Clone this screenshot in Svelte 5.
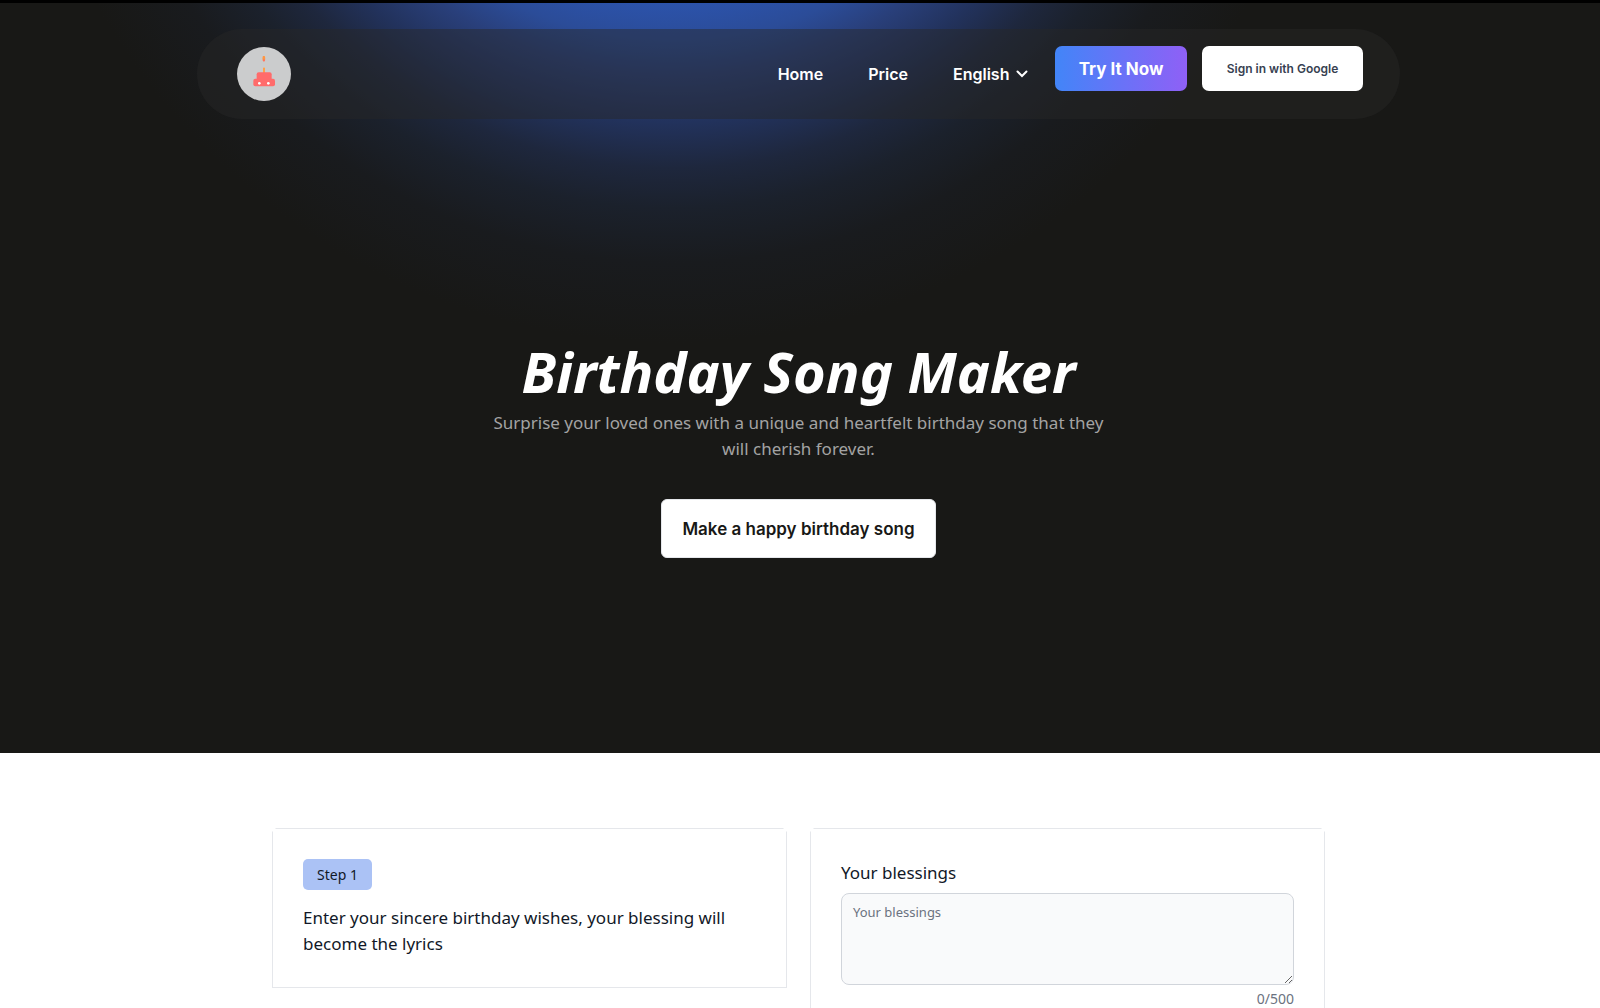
<script lang="ts">
	const maxLength = 500;

	const links = [
		{ label: 'Home', href: '#home' },
		{ label: 'Price', href: '#price' }
	];

	let language = $state('en');
	let blessings = $state('');
</script>

<div class="page">
	<section class="hero">
		<header class="navbar">
			<a class="logo" href="#home" aria-label="Birthday Song Maker">
				<svg viewBox="0 0 162 162" aria-hidden="true">
					<path d="M78 27h5c2 4 2 9 1 13l-3 4-4-4c-1-4-1-9 1-13z" fill="#ff9642" />
					<path d="M80 36l4 3-3 5-3-3z" fill="#ff6b6b" />
					<rect x="78" y="62" width="6" height="17" fill="#ffa14a" />
					<rect x="59" y="76" width="45" height="30" rx="6" fill="#ff6b6b" />
					<rect x="49" y="95" width="65" height="23" rx="6" fill="#ff6b6b" />
					<circle cx="67" cy="109" r="4" fill="#fff" />
					<circle cx="94" cy="109" r="4" fill="#fff" />
				</svg>
			</a>

			<nav class="links">
				{#each links as link}
					<a href={link.href}>{link.label}</a>
				{/each}
				<div class="language">
					<select aria-label="Language" bind:value={language}>
						<option value="en">English</option>
					</select>
					<svg viewBox="0 0 12 8" aria-hidden="true">
						<path d="M1.5 1.5 6 6l4.500-4.500" />
					</svg>
				</div>
			</nav>

			<div class="actions">
				<button class="try" type="button">Try It Now</button>
				<button class="sign-in" type="button">Sign in with Google</button>
			</div>
		</header>

		<div class="intro">
			<h1>Birthday Song Maker</h1>
			<p>Surprise your loved ones with a unique and heartfelt birthday song that they will cherish forever.</p>
			<button class="make" type="button">Make a happy birthday song</button>
		</div>
	</section>

	<main class="steps">
		<section class="card">
			<span class="badge">Step 1</span>
			<h2>Enter your sincere birthday wishes, your blessing will become the lyrics</h2>
		</section>

		<form class="card tall">
			<label for="blessings">Your blessings</label>
			<textarea
				id="blessings"
				placeholder="Your blessings"
				maxlength={maxLength}
				bind:value={blessings}
			></textarea>
			<div class="count">{blessings.length}/{maxLength}</div>
		</form>
	</main>
</div>

<style>
	:global(body) {
		margin: 0;
		background: #fff;
	}

	.page {
		height: 100vh;
		overflow: hidden;
		font-family: 'Noto Sans', sans-serif;
		color: #111827;
	}

	.page :global(*) {
		box-sizing: border-box;
	}

	.hero {
		display: flex;
		flex-direction: column;
		align-items: center;
		padding: 26px 3px 195px 0;
		border-top: 3px solid #000;
		/* Blue glow, centred above the top edge */
		background:
			radial-gradient(
				circle 660px at 42% -320px,
				#2c56b4 300px,
				#2b4c98 358px,
				#293f7a 395px,
				#22325c 440px,
				#1e273d 485px,
				#1b212c 525px,
				#191b1e 580px,
				#181816 660px
			),
			#181816;
	}

	/* Navigation bar */
	.navbar {
		display: flex;
		align-items: center;
		width: calc(100% - 394px);
		height: 90px;
		padding: 0 37px 0 40px;
		border-radius: 45px;
		background: rgba(40, 40, 40, 0.46);
		font-family: Inter, sans-serif;
	}

	.logo {
		width: 54px;
		height: 54px;
		border-radius: 50%;
		background: #cbcccd;
	}

	.logo svg {
		display: block;
	}

	.links {
		display: flex;
		align-items: center;
		gap: 45px;
		margin-left: auto;
		font-size: 16px;
		font-weight: 600;
	}

	.links a,
	.language select {
		color: #fff;
		text-decoration: none;
	}

	.language {
		display: flex;
		align-items: center;
		gap: 6px;
	}

	.language select {
		appearance: none;
		padding: 0;
		border: 0;
		background: transparent;
		font: inherit;
	}

	.language svg {
		width: 12px;
		height: 8px;
		fill: none;
		stroke: #fff;
		stroke-width: 2;
		stroke-linecap: round;
	}

	.actions {
		display: flex;
		align-self: flex-start;
		gap: 15px;
		margin: 17px 0 0 27px;
	}

	.actions button {
		height: 45px;
		padding: 0;
		border: 0;
		border-radius: 7px;
		font-family: inherit;
	}

	.actions .try {
		width: 132px;
		background: linear-gradient(90deg, #4285f8, #8f60f6);
		color: #fff;
		font-size: 17px;
		font-weight: 700;
	}

	.actions .sign-in {
		width: 161px;
		background: #fff;
		color: #374151;
		font-size: 12px;
		font-weight: 600;
	}

	/* Headline and call to action */
	.intro {
		display: flex;
		flex-direction: column;
		align-items: center;
		max-width: 640px;
		margin-top: 220px;
		text-align: center;
	}

	h1 {
		margin: 0;
		color: #fff;
		font-size: 56px;
		font-style: italic;
		font-weight: 700;
		line-height: 64px;
		white-space: nowrap;
	}

	.intro p {
		margin: 7px 0 0;
		color: #a3a3a3;
		font-size: 17px;
		line-height: 26px;
	}

	.make {
		height: 59px;
		margin-top: 37px;
		padding: 0 20px;
		border: 1px solid #e5e7eb;
		border-radius: 6px;
		background: #fff;
		color: #181816;
		font-family: Inter, sans-serif;
		font-size: 17px;
		font-weight: 600;
	}

	/* Step cards */
	.steps {
		display: grid;
		grid-template-columns: 1fr 1fr;
		align-items: start;
		gap: 23px;
		padding: 75px 275px 0 272px;
	}

	.card {
		padding: 30px;
		border: 1px solid #e5e7eb;
		/* Open top corners: the outline stops short of them */
		clip-path: polygon(0 4px, 4px 0, calc(100% - 4px) 0, 100% 4px, 100% 100%, 0 100%);
	}

	.tall {
		min-height: 240px;
	}

	.badge {
		display: inline-block;
		padding: 0 14px;
		border-radius: 5px;
		background: #abc2f5;
		font-size: 14px;
		line-height: 31px;
	}

	h2 {
		margin: 15px 0 0;
		font-size: 17px;
		font-weight: 400;
		line-height: 26px;
	}

	label {
		display: block;
		font-size: 17px;
		line-height: 28px;
	}

	textarea {
		display: block;
		width: 100%;
		height: 92px;
		margin-top: 6px;
		padding: 8px 11px;
		border: 1px solid #d1d5db;
		border-radius: 8px;
		background: #f9fafb;
		color: inherit;
		font-family: inherit;
		font-size: 13px;
		line-height: 20px;
	}

	textarea::placeholder {
		color: #6b7280;
	}

	.count {
		margin-top: 4px;
		color: #6b7280;
		font-size: 14px;
		line-height: 20px;
		text-align: right;
	}
</style>
